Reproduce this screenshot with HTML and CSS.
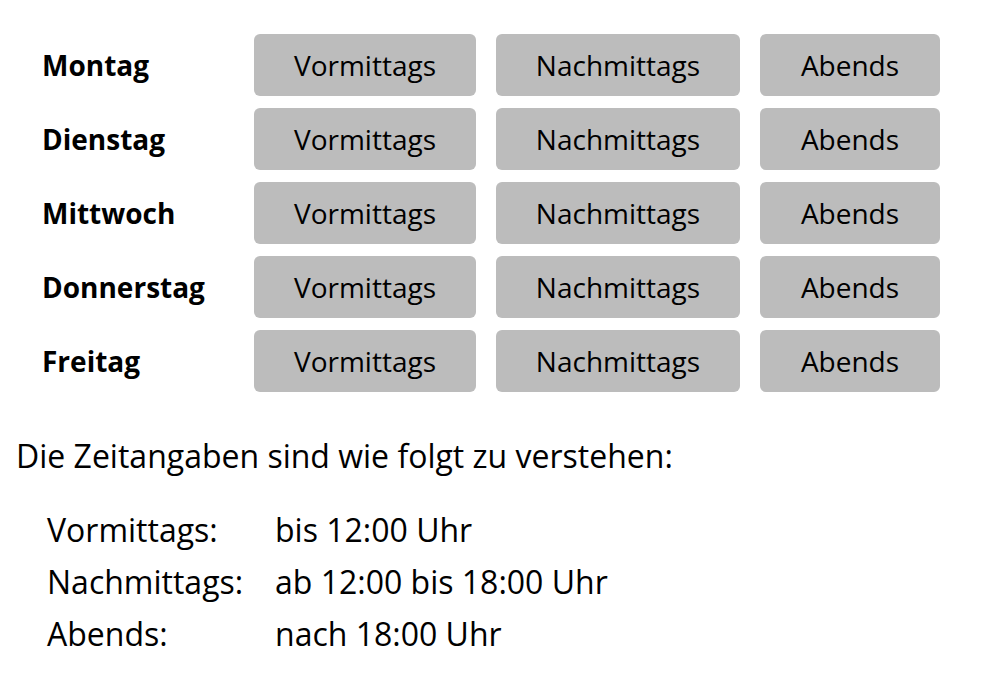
FILE: index.html
```html
<!DOCTYPE html>
<html lang="de">
<head>
    <meta charset="UTF-8">
    <meta name="viewport" content="width=device-width, initial-scale=1.0">
    <title>Verfügbarkeit</title>
    <link rel="stylesheet" href="styles.css">
</head>
<body>
    <div class="page">
        <div class="schedule">
            <div class="day">Montag</div>
            <button class="slot" type="button">Vormittags</button>
            <button class="slot" type="button">Nachmittags</button>
            <button class="slot" type="button">Abends</button>

            <div class="day">Dienstag</div>
            <button class="slot" type="button">Vormittags</button>
            <button class="slot" type="button">Nachmittags</button>
            <button class="slot" type="button">Abends</button>

            <div class="day">Mittwoch</div>
            <button class="slot" type="button">Vormittags</button>
            <button class="slot" type="button">Nachmittags</button>
            <button class="slot" type="button">Abends</button>

            <div class="day">Donnerstag</div>
            <button class="slot" type="button">Vormittags</button>
            <button class="slot" type="button">Nachmittags</button>
            <button class="slot" type="button">Abends</button>

            <div class="day">Freitag</div>
            <button class="slot" type="button">Vormittags</button>
            <button class="slot" type="button">Nachmittags</button>
            <button class="slot" type="button">Abends</button>
        </div>

        <p class="intro">Die Zeitangaben sind wie folgt zu verstehen:</p>

        <table class="legend">
            <tr><td>Vormittags:</td><td>bis 12:00 Uhr</td></tr>
            <tr><td>Nachmittags:</td><td>ab 12:00 bis 18:00 Uhr</td></tr>
            <tr><td>Abends:</td><td>nach 18:00 Uhr</td></tr>
        </table>
    </div>
</body>
</html>
```

FILE: styles.css
```css
body {
    margin: 0;
    font-family: 'Open Sans', 'Liberation Sans', sans-serif;
    font-size: 32px;
    color: #000;
    background-color: #fff;
}
.page {
    padding: 34px 16px 0;
}
.schedule {
    display: grid;
    grid-template-columns: 192px 222px 244px 180px;
    grid-auto-rows: 62px;
    column-gap: 20px;
    row-gap: 12px;
    margin-left: 26px;
    font-size: 28px;
}
.day {
    font-weight: bold;
    line-height: 62px;
}
.slot {
    font-family: inherit;
    font-size: 28px;
    line-height: 62px;
    padding: 0;
    color: #000;
    background-color: #bcbcbc;
    border: none;
    border-radius: 6px;
    cursor: pointer;
}
.slot:hover {
    background-color: #adadad;
}
.intro {
    margin: 42px 0 0;
    line-height: 44px;
}
.legend {
    margin: 26px 0 0 31px;
    border-collapse: collapse;
}
.legend td {
    padding: 0;
    line-height: 52px;
}
.legend td:first-child {
    width: 228px;
}
```
